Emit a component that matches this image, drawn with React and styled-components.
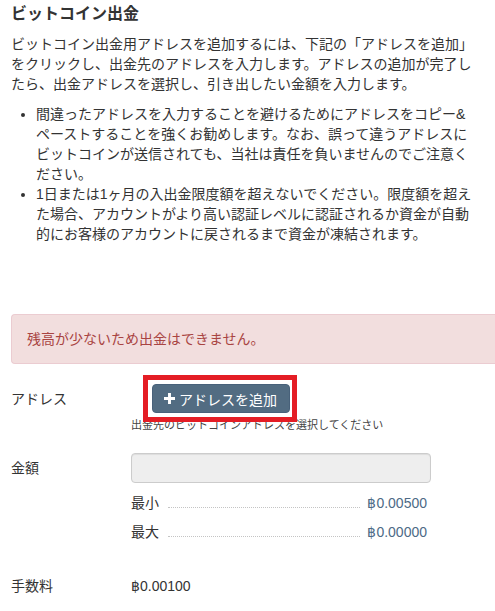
import styled, { createGlobalStyle } from "styled-components";

const GlobalStyle = createGlobalStyle`
    html, body {
        margin: 0;
        padding: 0;
        overflow-x: hidden;
        background: #fff;
    }
    body {
        font-family: "Liberation Sans", "Noto Sans CJK JP", sans-serif;
        font-size: 14px;
        line-height: 20px;
        color: #333;
    }
`;

const Page = styled.div`
    width: 465px;
    padding: 4px 0 20px 11px;
`;

const Title = styled.h3`
    margin: 0 0 10px;
    font-size: 16px;
    line-height: 20px;
    font-weight: bold;
`;

const Lead = styled.p`
    margin: 0 0 10px;
`;

const Notes = styled.ul`
    margin: 0 0 70px;
    padding-left: 25px;
    list-style: disc;
`;

const Alert = styled.div`
    width: calc(100% + 30px);
    box-sizing: border-box;
    padding: 14px 15px;
    margin-bottom: 20px;
    background: #f2dede;
    border: 1px solid #ebccd1;
    border-right: none;
    border-radius: 4px 0 0 4px;
    color: #a94442;
`;

const Row = styled.div`
    display: flex;
    align-items: ${(p) => (p.$top ? "flex-start" : "center")};
    margin-bottom: ${(p) => p.$gap || 0}px;
`;

const Label = styled.div`
    width: 120px;
    flex-shrink: 0;
    padding-top: ${(p) => p.$pad || 0}px;
`;

const Field = styled.div`
    width: 300px;
`;

const Highlight = styled.div`
    position: relative;
    display: inline-block;
    margin-left: 21px;
    &::after {
        content: "";
        position: absolute;
        left: -9px;
        top: -9px;
        right: -7px;
        bottom: -9px;
        border: 5px solid #e41d25;
        pointer-events: none;
        z-index: 2;
    }
`;

const AddButton = styled.button`
    display: flex;
    align-items: center;
    gap: 4px;
    height: 29px;
    padding: 0 12px 0 11px;
    background: #526c82;
    border: 1px solid #48617a;
    border-radius: 4px;
    color: #fff;
    font-family: inherit;
    font-size: 14px;
    cursor: pointer;
`;

const Hint = styled.div`
    position: relative;
    margin-top: 5px;
    font-size: 11px;
    line-height: 15px;
    color: #444;
    white-space: nowrap;
`;

const AmountInput = styled.input`
    display: block;
    width: 300px;
    height: 30px;
    box-sizing: border-box;
    background: #eee;
    border: 1px solid #ccc;
    border-radius: 4px;
    box-shadow: inset 0 1px 1px rgba(0, 0, 0, 0.075);
`;

const Limits = styled.div`
    display: flex;
    flex-direction: column;
    gap: 9px;
    margin-top: 10px;
    padding-right: 4px;
`;

const Limit = styled.div`
    display: flex;
    align-items: baseline;
`;

const Leader = styled.span`
    flex: 1;
    margin: 0 7px 0 9px;
    border-bottom: 1px dotted #c4c4c4;
`;

const Amount = styled.span`
    color: ${(p) => p.$color || "#333"};
`;

const Plus = () => (
    <svg width="11" height="11" viewBox="0 0 12 12">
        <path d="M4.4 0h3.2v4.4H12v3.2H7.6V12H4.4V7.6H0V4.4h4.4z" fill="#fff" />
    </svg>
);

const App = () => {
    return (
        <Page>
            <GlobalStyle />
            <Title>ビットコイン出金</Title>
            <Lead>
                ビットコイン出金用アドレスを追加するには、下記の「アドレスを追加」をクリックし、出金先のアドレスを入力します。アドレスの追加が完了したら、出金アドレスを選択し、引き出したい金額を入力します。
            </Lead>
            <Notes>
                <li>
                    間違ったアドレスを入力することを避けるためにアドレスをコピー&amp;ペーストすることを強くお勧めします。なお、誤って違うアドレスにビットコインが送信されても、当社は責任を負いませんのでご注意ください。
                </li>
                <li>
                    1日または1ヶ月の入出金限度額を超えないでください。限度額を超えた場合、アカウントがより高い認証レベルに認証されるか資金が自動的にお客様のアカウントに戻されるまで資金が凍結されます。
                </li>
            </Notes>
            <Alert>残高が少ないため出金はできません。</Alert>

            <Row $top>
                <Label $pad={5}>アドレス</Label>
                <Field>
                    <Highlight>
                        <AddButton>
                            <Plus />
                            アドレスを追加
                        </AddButton>
                    </Highlight>
                    <Hint>出金先のビットコインアドレスを選択してください</Hint>
                </Field>
            </Row>

            <Row $top $gap={34} style={{ marginTop: 20 }}>
                <Label $pad={5}>金額</Label>
                <Field>
                    <AmountInput disabled />
                    <Limits>
                        <Limit>
                            最小<Leader />
                            <Amount $color="#4d6a86">฿0.00500</Amount>
                        </Limit>
                        <Limit>
                            最大<Leader />
                            <Amount $color="#4d6a86">฿0.00000</Amount>
                        </Limit>
                    </Limits>
                </Field>
            </Row>

            <Row>
                <Label>手数料</Label>
                <Amount>฿0.00100</Amount>
            </Row>
        </Page>
    );
};

export default App;
